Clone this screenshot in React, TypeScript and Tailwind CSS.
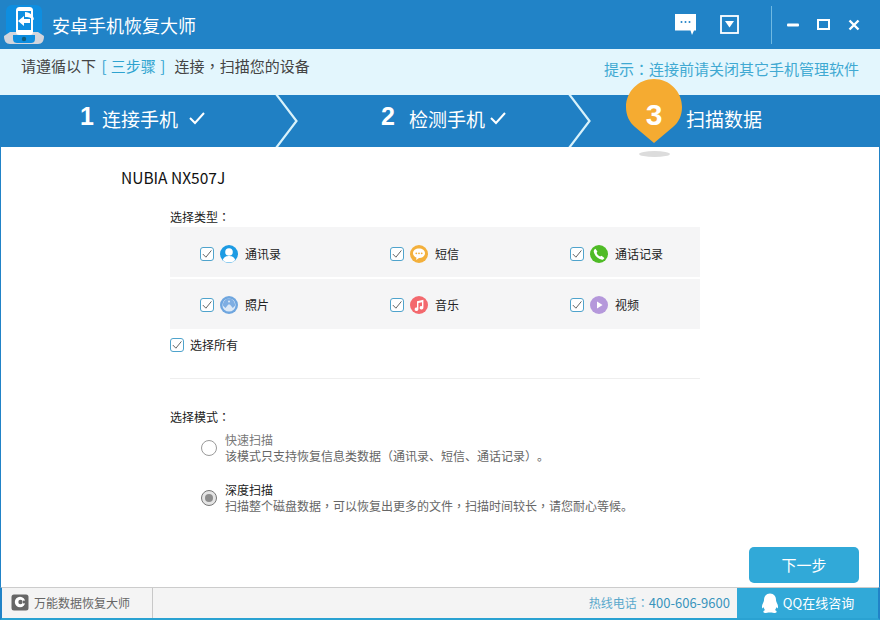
import React from "react";

const ARIAL = "font-['Liberation_Sans']";

function P({ c }: { c: string }) {
  return <span className="font-['Noto_Sans_CJK_TC']">{c}</span>;
}

function Check() {
  return (
    <span className="flex h-[14px] w-[14px] shrink-0 items-center justify-center rounded-[3px] border border-[#4fa3cc] bg-white">
      <svg width="10" height="10" viewBox="0 0 10 10" fill="none" stroke="#666" strokeWidth="1">
        <path d="M0.8 5 L3.9 8.2 L9.4 1.4" />
      </svg>
    </span>
  );
}

function IconContacts() {
  return (
    <svg width="18" height="18" viewBox="0 0 18 18">
      <circle cx="9" cy="9" r="9" fill="#1d9be3" />
      <circle cx="9" cy="7" r="3.8" fill="#fff" />
      <path d="M2.8 15 C4 11.5 6.5 11 9 11 C11.5 11 14 11.5 15.2 15 C13.6 16.8 11.4 17.5 9 17.5 C6.6 17.5 4.4 16.8 2.8 15Z" fill="#fff" />
    </svg>
  );
}
function IconSms() {
  return (
    <svg width="18" height="18" viewBox="0 0 18 18">
      <circle cx="9" cy="9" r="9" fill="#f3b03c" />
      <path d="M9 3.6 C12.4 3.6 15 5.6 15 8.3 C15 11 12.4 13 9 13 L6.2 15 L6.4 12.5 C4.3 11.7 3 10.2 3 8.3 C3 5.6 5.6 3.6 9 3.6Z" fill="#fff" />
      <circle cx="6.3" cy="8.3" r="0.9" fill="#f3b03c" />
      <circle cx="9" cy="8.3" r="0.9" fill="#f3b03c" />
      <circle cx="11.7" cy="8.3" r="0.9" fill="#f3b03c" />
    </svg>
  );
}
function IconPhone() {
  return (
    <svg width="18" height="18" viewBox="0 0 18 18">
      <circle cx="9" cy="9" r="9" fill="#4fbb26" />
      <path d="M5.4 3.8 L7.4 6.6 L6.6 8 C7.3 9.6 8.5 10.9 10.1 11.6 L11.5 10.8 L14.4 12.9 C13.9 14.2 12.6 14.9 11.3 14.6 C7.8 13.7 4.6 10.5 3.8 7 C3.5 5.7 4.2 4.4 5.4 3.8Z" fill="#fff" />
    </svg>
  );
}
function IconPhoto() {
  return (
    <svg width="18" height="18" viewBox="0 0 18 18">
      <circle cx="9" cy="9" r="9" fill="#6fa6df" />
      <circle cx="9" cy="9" r="6.6" fill="#dce9f7" />
      <path d="M2.8 9.6 C3 5.5 5.6 2.6 9 2.6 C12.4 2.6 15 5.5 15.2 9.6 L12.8 12 L9.9 8.4 L8.3 8.4 L5.4 12Z" fill="#7eaee3" />
      <circle cx="9" cy="5.4" r="1" fill="#dce9f7" />
    </svg>
  );
}
function IconMusic() {
  return (
    <svg width="18" height="18" viewBox="0 0 18 18">
      <circle cx="9" cy="9" r="9" fill="#f3696e" />
      <path d="M7 5.2 L13.4 3.8 L13.4 11.8 A1.9 1.7 0 1 1 12 10.2 L12 6.3 L8.4 7.1 L8.4 13.2 A1.9 1.7 0 1 1 7 11.6 Z" fill="#fff" />
    </svg>
  );
}
function IconVideo() {
  return (
    <svg width="18" height="18" viewBox="0 0 18 18">
      <circle cx="9" cy="9" r="9" fill="#b598db" />
      <path d="M7 5.4 L12.6 9 L7 12.6 Z" fill="#fff" />
    </svg>
  );
}

function Item({ icon, label }: { icon: React.ReactNode; label: string }) {
  return (
    <div className="flex items-center">
      <Check />
      <span className="ml-[6px] flex">{icon}</span>
      <span className="ml-[7px] text-[12px] text-[#222]">{label}</span>
    </div>
  );
}

function Chevron() {
  return (
    <svg width="24" height="52" viewBox="0 0 24 52" fill="none" stroke="#d8f2fb" strokeWidth="2.2" className="shrink-0">
      <path d="M1 -1 L21.5 26 L1 53" />
    </svg>
  );
}

function Tick({ className }: { className: string }) {
  return (
    <svg width="18" height="14" viewBox="0 0 18 14" fill="none" stroke="#fff" strokeWidth="2" className={className}>
      <path d="M2 7 L7 12 L16 2" />
    </svg>
  );
}

export default function App() {
  return (
    <div
      className="flex h-[620px] w-[880px] flex-col overflow-hidden bg-white [text-spacing-trim:space-all]"
      style={{ fontFamily: '"Noto Sans CJK SC", "Open Sans", sans-serif' }}
    >
      {/* title bar */}
      <div className="flex h-[49px] shrink-0 items-center bg-[#2183c7]">
        <svg width="40" height="44" viewBox="0 0 40 44" className="ml-[4px] mt-[-1px] shrink-0">
          <rect x="2" y="3" width="36" height="32" rx="6" fill="#0e8ee0" />
          <path d="M0 34 L6 30 L34 30 L40 34 C40 39 38 42 34 42 L6 42 C2 42 0 39 0 34Z" fill="#d3d5dc" />
          <path d="M9 33 L31 33 L31 37 C31 40 29 41 27 41 L13 41 C11 41 9 40 9 37Z" fill="#0e8ee0" />
          <circle cx="20" cy="37" r="2.2" fill="#135e7e" />
          <rect x="12" y="5" width="17" height="28" rx="3.5" fill="#fff" />
          <rect x="14" y="9" width="13" height="19" fill="#0e8ee0" />
          <path d="M21 10 C26 10 30 14 30 18 C27 15.5 24 15 21 15Z" fill="#fff" />
          <path d="M20 14 L14 19 L20 24 L20 21 L26 21 L26 17 L20 17Z" fill="#fff" />
        </svg>
        <span className="ml-[8px] text-[18px] leading-none text-white">安卓手机恢复大师</span>
        <div className="ml-auto flex items-center">
          <svg width="23" height="23" viewBox="0 0 23 23">
            <path d="M1 1 H22 V17.5 H20 L18 22 L16.5 17.5 H1Z" fill="#fff" />
            <circle cx="7.5" cy="9" r="1" fill="#2183c7" />
            <circle cx="11.5" cy="9" r="1" fill="#2183c7" />
            <circle cx="15.5" cy="9" r="1" fill="#2183c7" />
          </svg>
          <svg width="19" height="19" viewBox="0 0 19 19" className="ml-[23px]">
            <rect x="1" y="1" width="17" height="17" fill="none" stroke="#fff" strokeWidth="1.8" />
            <path d="M5 6 H14 L9.5 12.5Z" fill="#fff" />
          </svg>
          <div className="ml-[32px] mr-[15px] h-[38px] w-px bg-[#6fb9e2]" />
          <svg width="12" height="4" viewBox="0 0 12 4">
            <rect width="12" height="3" y="0.5" fill="#fff" rx="1" />
          </svg>
          <svg width="13" height="11" viewBox="0 0 13 11" className="ml-[18px]">
            <rect x="1" y="1" width="11" height="9" fill="none" stroke="#fff" strokeWidth="2" />
          </svg>
          <svg width="12" height="12" viewBox="0 0 12 12" className="ml-[18px] mr-[20px]">
            <path d="M1.5 1.5 L10.5 10.5 M10.5 1.5 L1.5 10.5" stroke="#fff" strokeWidth="2.4" />
          </svg>
        </div>
      </div>

      {/* hint bar */}
      <div className="flex h-[46px] shrink-0 items-start justify-between bg-[#e3f6fd] pl-[21px] pr-[21px]">
        <div className="mt-[7px] text-[15px] leading-[20px] text-[#444]">
          请遵循以下 <span className="ml-[2px] mr-[6px] text-[#2ea3cf] [word-spacing:1px]">[ 三步骤 ]</span> 连接<P c="，" />扫描您的设备
        </div>
        <div className="mt-[10px] text-[15px] leading-[20px] text-[#40a9d2]">提示<P c="：" />连接前请关闭其它手机管理软件</div>
      </div>

      {/* steps */}
      <div className="relative flex h-[52px] shrink-0 items-center bg-[#2080c4] text-white">
        <div className="flex w-[275px] items-center pb-[6px] pl-[80px]">
          <span className={`${ARIAL} mb-[4px] text-[25px] font-bold leading-none`}>1</span>
          <span className="ml-[8px] text-[19px] leading-none">连接手机</span>
          <Tick className="ml-[10px]" />
        </div>
        <Chevron />
        <div className="flex w-[269px] items-center pb-[6px] pl-[82px]">
          <span className={`${ARIAL} mb-[4px] text-[25px] font-bold leading-none`}>2</span>
          <span className="ml-[14px] text-[19px] leading-none">检测手机</span>
          <Tick className="ml-[4px]" />
        </div>
        <Chevron />
        <div className="pb-[6px] pl-[94px] text-[19px] leading-none">扫描数据</div>
        {/* pin */}
        <div className="absolute left-[626px] top-[-16px] h-[64px] w-[56px]">
          <svg width="56" height="64" viewBox="0 0 56 64" className="absolute inset-0">
            <path d="M28 64 L9 48 C3 43 0 36 0 28 C0 12.5 12.5 0 28 0 C43.5 0 56 12.5 56 28 C56 36 53 43 47 48 Z" fill="#f5ab31" />
          </svg>
          <span className={`${ARIAL} absolute inset-x-0 top-[20px] text-center text-[30px] font-bold leading-[32px] text-white`}>3</span>
        </div>
        <div className="absolute left-[639px] top-[56px] h-[6px] w-[31px] rounded-[50%] bg-[#dcdcdc]" />
      </div>

      {/* main */}
      <div className="flex min-h-0 flex-1 flex-col border-x border-[#2183c7]">
        <div className="mt-[20px] pl-[120px] text-[15.5px] leading-[20px] text-[#111]">NUBIA NX507J</div>
        <div className="ml-[169px] w-[530px]">
          <div className="mt-[20px] text-[12px] leading-[20px] text-[#222]">选择类型<P c="：" /></div>
          <div className="flex flex-col gap-[2px]">
            <div className="grid h-[50px] grid-cols-[190px_180px_1fr] items-center bg-[#f5f5f6] pl-[30px] pt-[4px]">
              <Item icon={<IconContacts />} label="通讯录" />
              <Item icon={<IconSms />} label="短信" />
              <Item icon={<IconPhone />} label="通话记录" />
            </div>
            <div className="grid h-[50px] grid-cols-[190px_180px_1fr] items-center bg-[#f5f5f6] pl-[30px] pt-[1px]">
              <Item icon={<IconPhoto />} label="照片" />
              <Item icon={<IconMusic />} label="音乐" />
              <Item icon={<IconVideo />} label="视频" />
            </div>
          </div>
          <div className="mt-[8px] flex items-center">
            <Check />
            <span className="ml-[6px] text-[12px] leading-[16px] text-[#222]">选择所有</span>
          </div>
          <div className="mt-[25px] h-px bg-[#eeeeee]" />
          <div className="mt-[28px] text-[12px] leading-[20px] text-[#222]">选择模式<P c="：" /></div>

          <div className="mt-[5px] flex items-center pl-[31px]">
            <span className="h-[16px] w-[16px] shrink-0 rounded-full border border-[#9a9a9a] bg-white" />
            <div className="ml-[8px]">
              <div className="text-[12px] leading-[16px] text-[#777]">快速扫描</div>
              <div className="text-[12px] leading-[16px] text-[#666]">该模式只支持恢复信息类数据（通讯录、短信、通话记录）。</div>
            </div>
          </div>
          <div className="mt-[18px] flex items-center pl-[31px]">
            <span className="flex h-[16px] w-[16px] shrink-0 items-center justify-center rounded-full border border-[#777] bg-[#e4e4e4]">
              <span className="h-[8px] w-[8px] rounded-full bg-[#8d8d8d]" />
            </span>
            <div className="ml-[8px]">
              <div className="text-[12px] leading-[16px] text-[#222]">深度扫描</div>
              <div className="text-[12px] leading-[16px] text-[#666]">扫描整个磁盘数据<P c="，" />可以恢复出更多的文件<P c="，" />扫描时间较长<P c="，" />请您耐心等候。</div>
            </div>
          </div>
        </div>
        <div className="mt-auto mb-[4px] mr-[20px] flex justify-end">
          <div className="flex h-[36px] w-[110px] items-center justify-center rounded-[5px] bg-[#31a9d8] text-[15px] text-white">下一步</div>
        </div>
      </div>

      {/* footer */}
      <div className="flex h-[33px] shrink-0 border-x-2 border-b-2 border-x-[#2183c7] border-b-[#2aa2d2] border-t border-t-[#cccccc] bg-[#f4f4f4]">
        <div className="flex w-[151px] items-center border-r border-[#c8c8c8] pl-[9px]">
          <svg width="18" height="18" viewBox="0 0 18 18" className="shrink-0">
            <rect x="0.5" y="0.5" width="17" height="16" rx="2.5" fill="#666" />
            <circle cx="9" cy="8" r="5.2" fill="#fff" />
            <circle cx="9.5" cy="8" r="2.2" fill="#666" />
            <rect x="12" y="6.6" width="3" height="2.8" fill="#666" />
          </svg>
          <span className="ml-[5px] text-[12px] text-[#666]">万能数据恢复大师</span>
        </div>
        <div className="flex flex-1 items-center justify-end pr-[7px] text-[12px] text-[#5aa9cc]">
          热线电话<P c="：" /><span className="text-[13px] text-[#3a94bd]">400-606-9600</span>
        </div>
        <div className="flex w-[141px] items-center justify-center bg-[#31a9d8] text-[13px] text-white">
          <svg width="18" height="21" viewBox="0 0 18 21" className="mr-[4px] shrink-0">
            <path d="M9 0.5 C13 0.5 15 3.5 15 7 C15 8.5 15.8 9.5 16.6 11.5 C17.4 13.8 17 15.5 16 15.2 L15.2 14 C15 15.5 14.6 16.5 14 17 C15.2 17.6 15.8 18.3 15.6 19 C15.3 20.2 12.5 20.4 10.6 19.6 L7.4 19.6 C5.5 20.4 2.7 20.2 2.4 19 C2.2 18.3 2.8 17.6 4 17 C3.4 16.5 3 15.5 2.8 14 L2 15.2 C1 15.5 0.6 13.8 1.4 11.5 C2.2 9.5 3 8.5 3 7 C3 3.5 5 0.5 9 0.5Z" fill="#fff" />
          </svg>
          QQ在线咨询
        </div>
      </div>
    </div>
  );
}
